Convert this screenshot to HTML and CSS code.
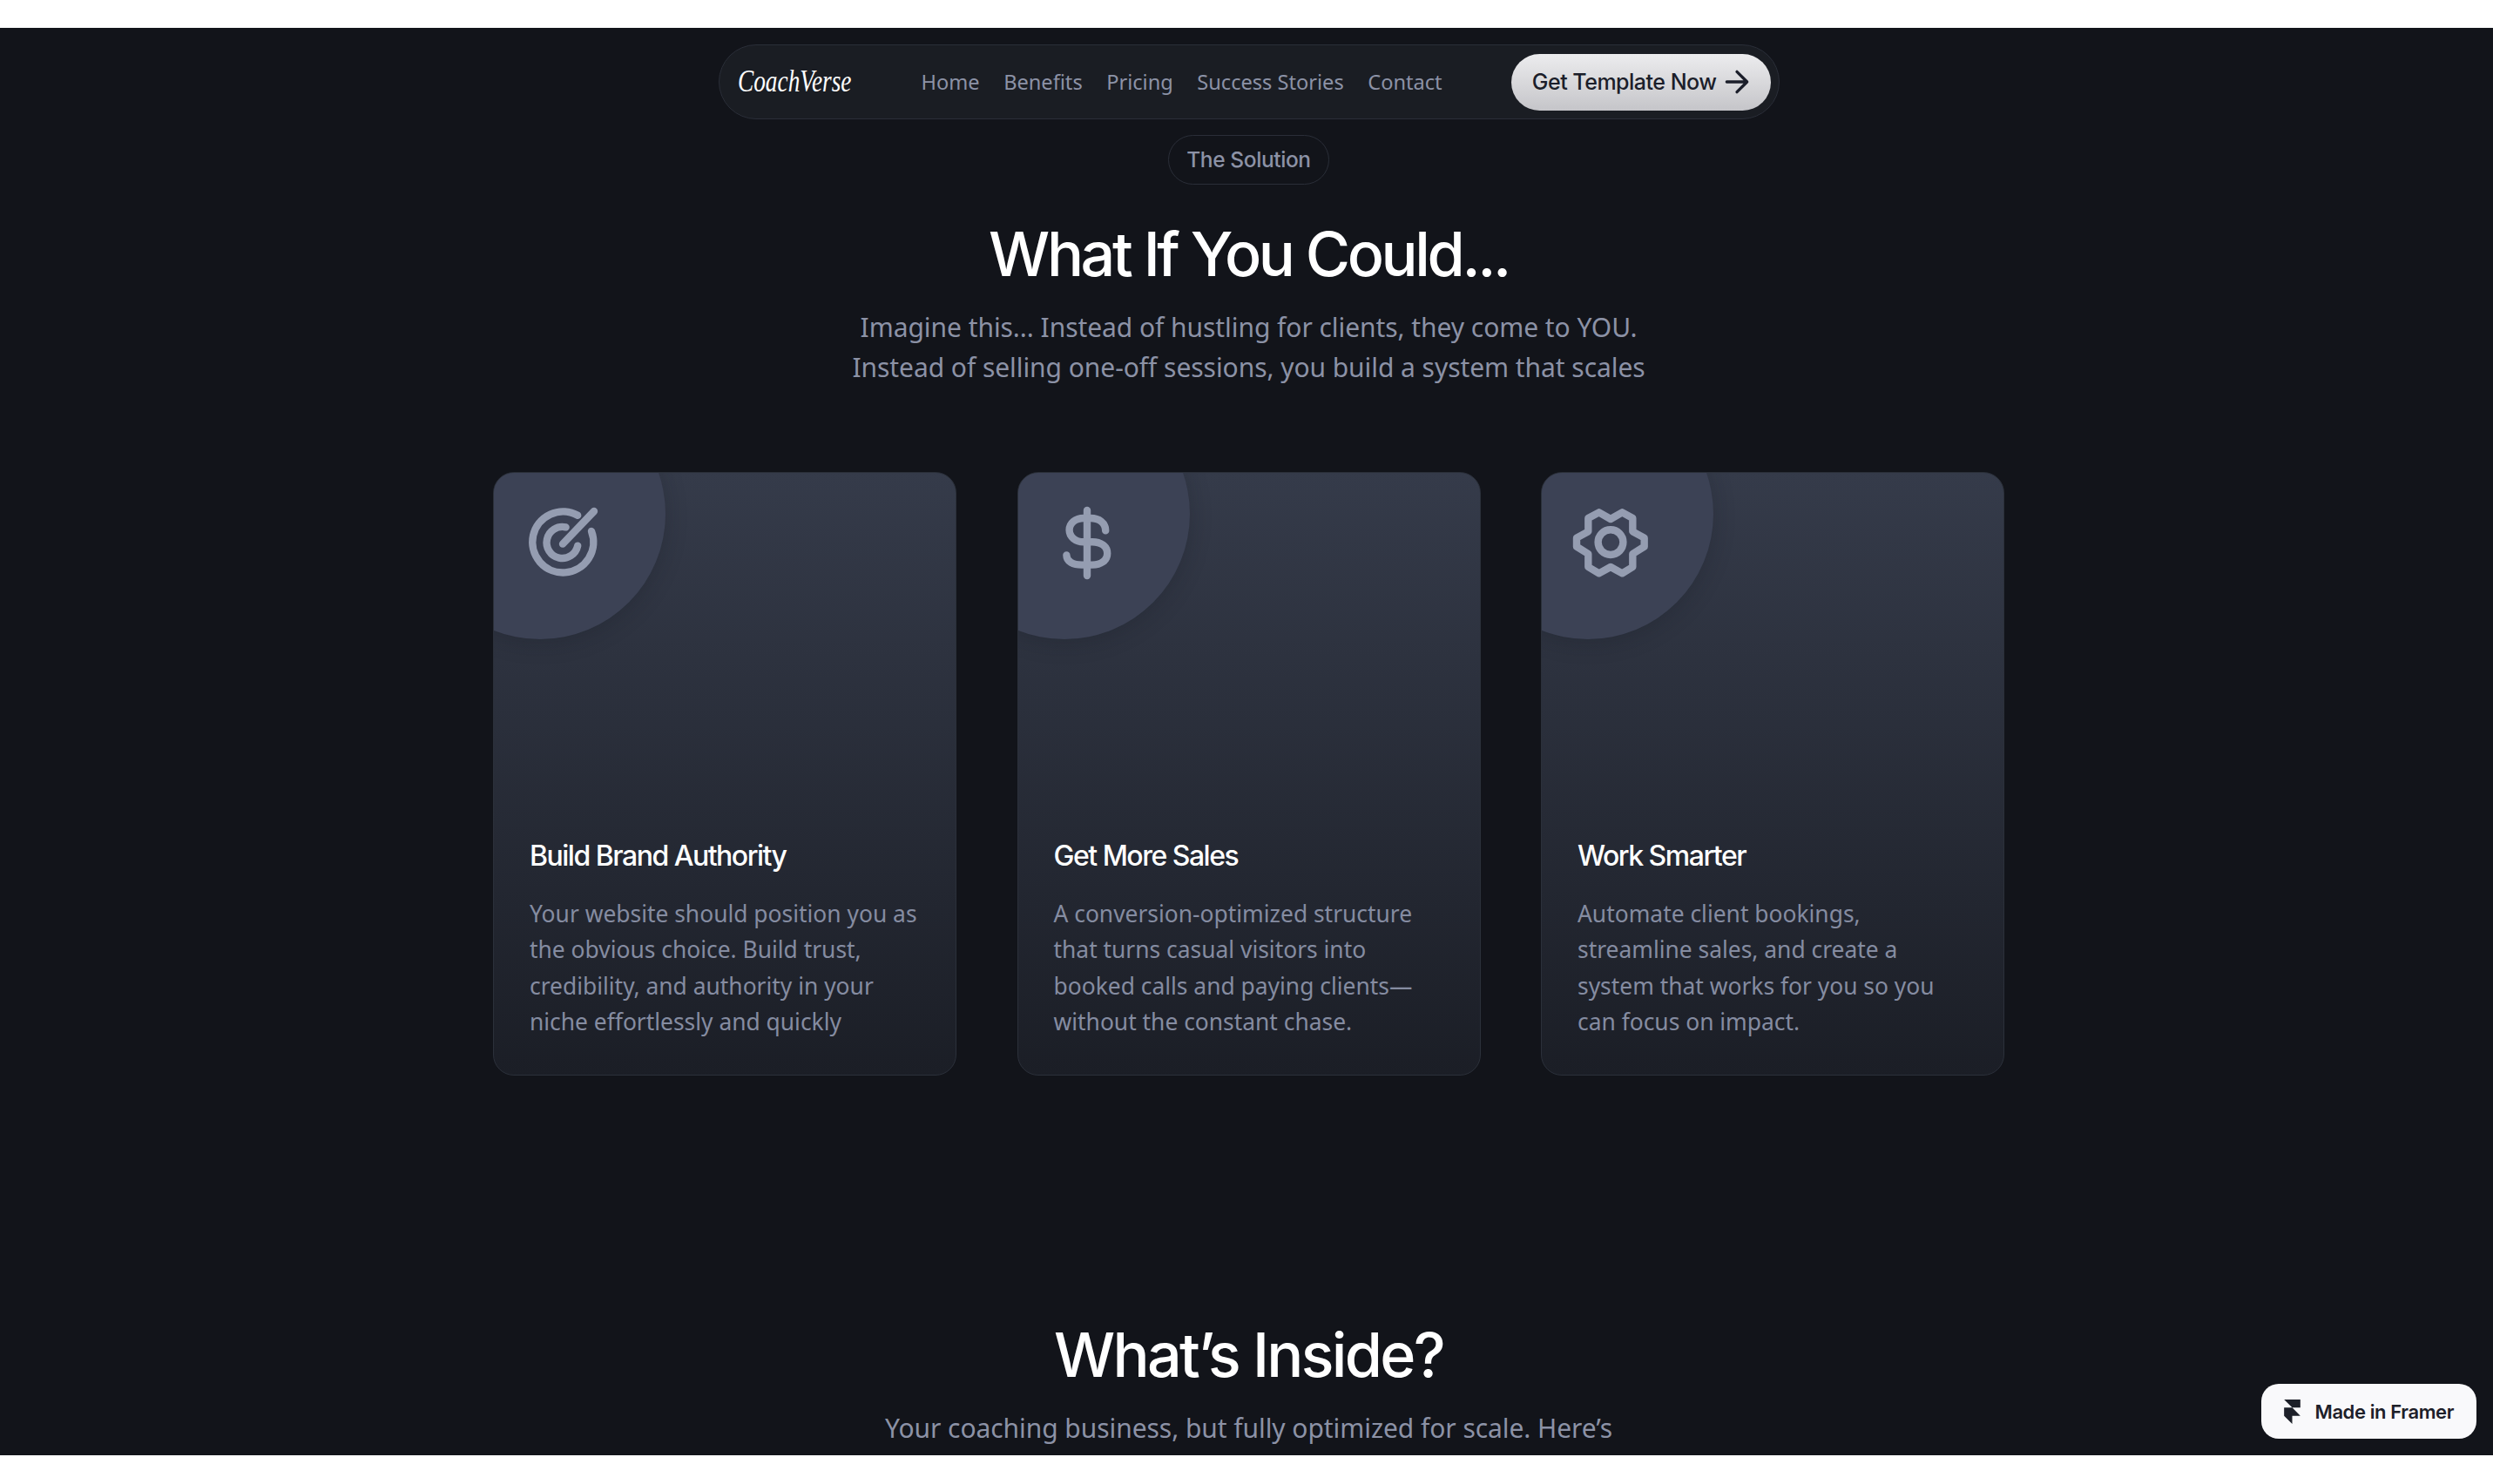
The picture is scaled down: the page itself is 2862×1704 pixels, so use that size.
FILE: index.html
```html
<!DOCTYPE html>
<html lang="en">
<head>
  <meta charset="UTF-8" />
  <meta name="viewport" content="width=device-width, initial-scale=1.0" />
  <title>CoachVerse - The Solution</title>
  <link rel="stylesheet" href="styles.css">
</head>
<body>
  <div class="frame">
    <nav class="nav">
      <a class="logo" href="#">CoachVerse</a>
      <div class="nav-links">
        <a href="#">Home</a>
        <a href="#">Benefits</a>
        <a href="#">Pricing</a>
        <a href="#">Success Stories</a>
        <a href="#">Contact</a>
      </div>
      <a class="cta" href="#">
        Get Template Now
        <svg class="cta-arrow" viewBox="0 0 24 24"><path d="M5 12h14M12 5l7 7-7 7" /></svg>
      </a>
    </nav>

    <section class="solution">
      <span class="tag">The Solution</span>
      <h1>What If You Could...</h1>
      <p class="lead">Imagine this... Instead of hustling for clients, they come to YOU.<br>Instead of selling one-off sessions, you build a system that scales</p>

      <div class="cards">
        <article class="card">
          <div class="card-circle"></div>
          <svg class="card-icon" viewBox="0 0 24 24">
            <path d="M20.25 8.75A8.75 8.75 0 1 1 16.3 4.2" />
            <path d="M16.3 12.9A4.5 4.5 0 1 1 12.9 7.6" />
            <path d="M12 12.4L21 3" />
          </svg>
          <h3>Build Brand Authority</h3>
          <p>Your website should position you as the obvious choice. Build trust, credibility, and authority in your niche effortlessly and quickly</p>
        </article>
        <article class="card">
          <div class="card-circle"></div>
          <svg class="card-icon" viewBox="0 0 24 24">
            <path d="M12 2.75V21.5" />
            <path d="M17.3 8.6C17.3 6.3 15.4 5 13 5H11C8.7 5 6.9 6.4 6.9 8.4S8.7 11.8 11 11.8H13.5C15.9 11.8 17.8 13 17.8 15.1S15.9 18.4 13.5 18.4H10.5C8 18.4 6.1 17.5 6.1 15.6" />
          </svg>
          <h3>Get More Sales</h3>
          <p>A conversion-optimized structure that turns casual visitors into booked calls and paying clients—without the constant chase.</p>
        </article>
        <article class="card">
          <div class="card-circle"></div>
          <svg class="card-icon" viewBox="0 0 24 24">
            <path d="M8.67 3.33L12 5.25L15.33 3.33L18.33 5V8.83L21.67 10.67V13.17L18.33 15.25V19L15.33 20.83L12 19L8.67 20.83L5.58 19V15.25L2.25 13.17V10.67L5.58 8.83V5Z" />
            <circle cx="12" cy="11.9" r="3.6" />
          </svg>
          <h3>Work Smarter</h3>
          <p>Automate client bookings, streamline sales, and create a system that works for you so you can focus on impact.</p>
        </article>
      </div>
    </section>

    <section class="inside">
      <h2>What’s Inside?</h2>
      <p class="lead">Your coaching business, but fully optimized for scale. Here’s</p>
    </section>

    <a class="framer-badge" href="#">
      <svg class="framer-logo" viewBox="0 0 14 21"><path d="M0 0h14v7H7zM0 7h7l7 7H0zM0 14h7v7z" /></svg>
      Made in Framer
    </a>
  </div>
</body>
</html>
```

FILE: styles.css
```css
* {
  box-sizing: border-box;
}
body {
  margin: 0;
  height: 1704px;
  padding-top: 32px;
  background: #ffffff;
  font-family: 'Noto Sans', sans-serif;
  overflow: hidden;
}
a {
  text-decoration: none;
}
.frame {
  position: relative;
  height: 1639px;
  padding-left: 5px;
  padding-top: 19px;
  background: #12141a;
  overflow: hidden;
  text-align: center;
}
.nav {
  display: flex;
  align-items: center;
  width: 1218px;
  height: 86px;
  margin: 0 auto;
  padding: 0 9px 0 21px;
  background: #1a1d23;
  border: 1px solid #2a2e38;
  border-radius: 43px;
}
.logo {
  width: 190px;
  font-family: 'Liberation Serif', serif;
  font-style: italic;
  font-size: 35px;
  color: #ffffff;
  text-align: left;
  transform: scaleX(0.78);
  transform-origin: left center;
}
.nav-links {
  display: flex;
  gap: 27.5px;
  margin-left: 21px;
}
.nav-links a {
  font-size: 23.6px;
  color: #8c92a6;
}
.cta {
  display: flex;
  align-items: center;
  gap: 3px;
  height: 65px;
  margin-left: auto;
  padding: 0 19px 0 24px;
  border-radius: 33px;
  background: linear-gradient(to bottom, #ececee, #c5c5c9);
  font-family: 'Inter', sans-serif;
  font-size: 25px;
  font-weight: 500;
  letter-spacing: -0.5px;
  color: #1b1e2a;
  white-space: nowrap;
}
.cta-arrow {
  width: 40px;
  height: 40px;
  fill: none;
  stroke: #1b1e2a;
  stroke-width: 2;
  stroke-linecap: round;
  stroke-linejoin: round;
}
.tag {
  display: inline-block;
  height: 57px;
  margin-top: 18px;
  padding: 0 20px;
  line-height: 55px;
  border: 1px solid #2a2e38;
  border-radius: 29px;
  font-family: 'Inter', sans-serif;
  font-size: 24.5px;
  font-weight: 500;
  letter-spacing: -0.4px;
  color: #8c92a6;
}
h1, h2 {
  margin: 0;
  font-family: 'Inter', sans-serif;
  font-size: 70px;
  font-weight: 500;
  line-height: 86px;
  letter-spacing: -3.4px;
  color: #ffffff;
}
h1 {
  margin-top: 37px;
}
h2 {
  letter-spacing: -2.7px;
}
.lead {
  margin: 18px 0 0;
  font-size: 30px;
  line-height: 46px;
  letter-spacing: -0.06px;
  color: #8c92a6;
}
.cards {
  display: grid;
  grid-template-columns: repeat(3, 532px);
  gap: 69.5px;
  justify-content: center;
  margin-top: 97px;
}
.card {
  position: relative;
  display: flex;
  flex-direction: column;
  justify-content: flex-end;
  height: 693px;
  padding: 0 40px 39px 41px;
  background: linear-gradient(to bottom, #353b4a, #1b1e26);
  border: 1px solid #2b303a;
  border-radius: 24px;
  overflow: hidden;
  text-align: left;
}
.card-circle {
  position: absolute;
  left: -91px;
  top: -97px;
  width: 288px;
  height: 288px;
  border-radius: 50%;
  background: #3c4255;
  box-shadow: 0 4px 24px rgba(20, 23, 32, 0.25);
}
.card-icon {
  position: absolute;
  left: 31px;
  top: 32px;
  width: 96px;
  height: 96px;
  fill: none;
  stroke: #959db1;
  stroke-width: 2.1;
  stroke-linecap: round;
  stroke-linejoin: round;
}
.card h3 {
  margin: 0;
  font-family: 'Inter', sans-serif;
  font-size: 32px;
  font-weight: 500;
  line-height: 44px;
  letter-spacing: -1.5px;
  color: #ffffff;
}
.card p {
  margin: 24px 0 0;
  font-size: 26.4px;
  line-height: 41.6px;
  color: #858ca1;
}
.inside h2 {
  margin-top: 278px;
}
.framer-badge {
  position: absolute;
  right: 19px;
  bottom: 19px;
  display: flex;
  align-items: center;
  gap: 16px;
  height: 63px;
  padding: 0 26px;
  background: #f9f9fb;
  border-radius: 20px;
  font-family: 'Inter', sans-serif;
  font-size: 22px;
  font-weight: 600;
  letter-spacing: -0.4px;
  color: #1d2029;
}
.framer-logo {
  width: 19px;
  height: 28px;
  fill: #1d2029;
}
```
